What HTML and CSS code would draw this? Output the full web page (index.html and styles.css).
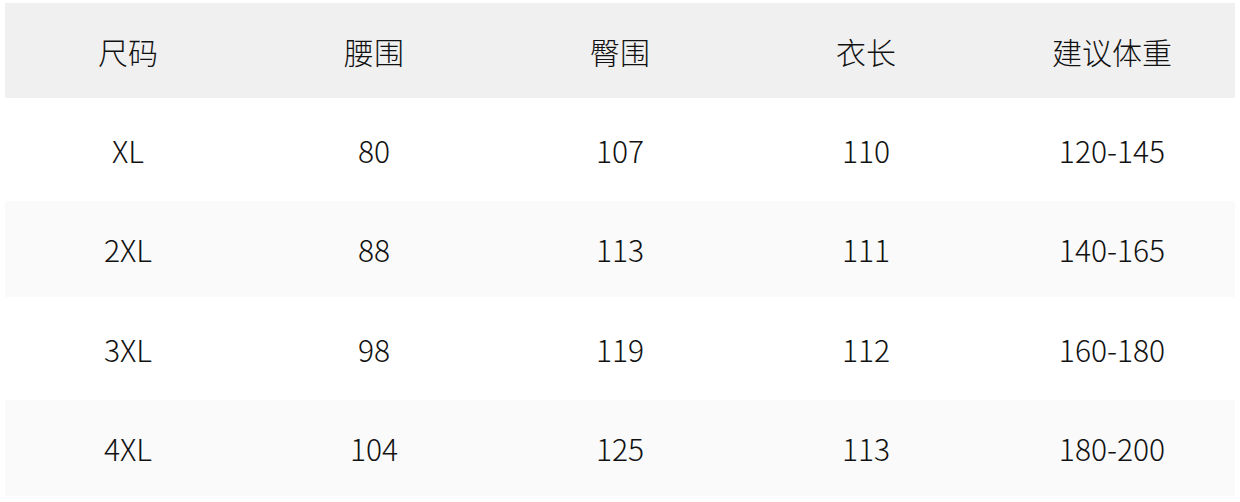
FILE: index.html
```html
<!DOCTYPE html>
<html lang="zh-CN">
<head>
<meta charset="utf-8">
<link rel="stylesheet" href="styles.css">
</head>
<body>
<table class="size-table">
  <thead>
    <tr class="head"><th>尺码</th><th>腰围</th><th>臀围</th><th>衣长</th><th>建议体重</th></tr>
  </thead>
  <tbody>
    <tr class="odd"><td>XL</td><td>80</td><td>107</td><td>110</td><td>120-145</td></tr>
    <tr class="even"><td>2XL</td><td>88</td><td>113</td><td>111</td><td>140-165</td></tr>
    <tr class="odd"><td>3XL</td><td>98</td><td>119</td><td>112</td><td>160-180</td></tr>
    <tr class="even"><td>4XL</td><td>104</td><td>125</td><td>113</td><td>180-200</td></tr>
  </tbody>
</table>
</body>
</html>
```
FILE: styles.css
```css
html, body {
  margin: 0;
  padding: 0;
  background: #ffffff;
}
body {
  padding: 3px 5px 0 5px;
  font-family: "Noto Sans CJK SC", "Noto Sans", sans-serif;
  color: #111111;
}
.size-table {
  width: 1230px;
  border-collapse: collapse;
  table-layout: fixed;
}
.size-table th,
.size-table td {
  width: 246px;
  padding: 0;
  text-align: center;
  vertical-align: middle;
  font-size: 30px;
  font-weight: 300;
  line-height: 1;
}
.head {
  background: #f0f0f0;
  height: 95px;
}
.odd {
  background: #ffffff;
  height: 103px;
}
.even {
  background: #fafafa;
  height: 96px;
}
```
